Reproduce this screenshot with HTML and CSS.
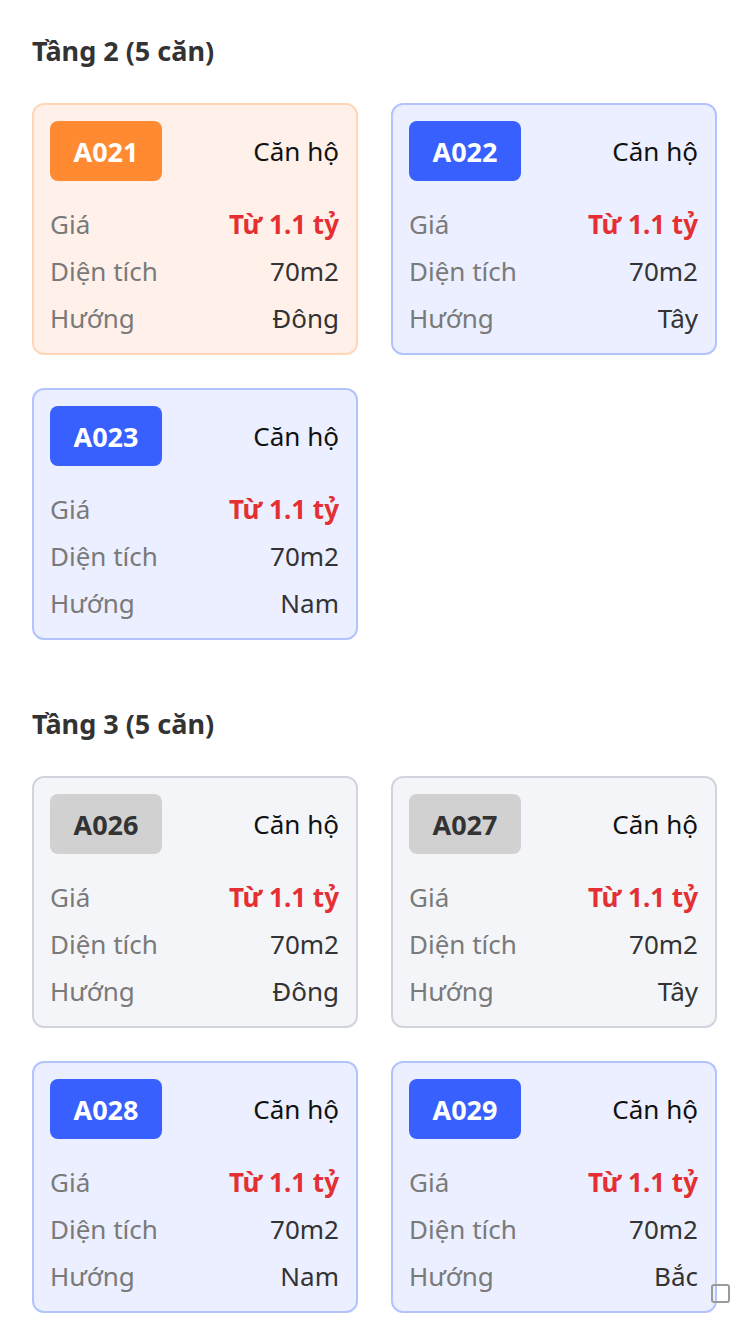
FILE: index.html
```html
<!DOCTYPE html>
<html lang="vi">
<head>
<meta charset="utf-8">
<link rel="stylesheet" href="styles.css">
</head>
<body>
<main class="page">
  <section class="floor">
    <h2 class="floor-title">Tầng 2 (5 căn)</h2>
    <div class="grid">
      <div class="card card-orange">
        <div class="card-head"><span class="badge">A021</span><span class="type">Căn hộ</span></div>
        <div class="row"><span class="label">Giá</span><span class="price">Từ 1.1 tỷ</span></div>
        <div class="row"><span class="label">Diện tích</span><span class="value">70m2</span></div>
        <div class="row"><span class="label">Hướng</span><span class="value">Đông</span></div>
      </div>
      <div class="card card-blue">
        <div class="card-head"><span class="badge">A022</span><span class="type">Căn hộ</span></div>
        <div class="row"><span class="label">Giá</span><span class="price">Từ 1.1 tỷ</span></div>
        <div class="row"><span class="label">Diện tích</span><span class="value">70m2</span></div>
        <div class="row"><span class="label">Hướng</span><span class="value">Tây</span></div>
      </div>
      <div class="card card-blue">
        <div class="card-head"><span class="badge">A023</span><span class="type">Căn hộ</span></div>
        <div class="row"><span class="label">Giá</span><span class="price">Từ 1.1 tỷ</span></div>
        <div class="row"><span class="label">Diện tích</span><span class="value">70m2</span></div>
        <div class="row"><span class="label">Hướng</span><span class="value">Nam</span></div>
      </div>
    </div>
  </section>
  <section class="floor">
    <h2 class="floor-title">Tầng 3 (5 căn)</h2>
    <div class="grid">
      <div class="card card-gray">
        <div class="card-head"><span class="badge">A026</span><span class="type">Căn hộ</span></div>
        <div class="row"><span class="label">Giá</span><span class="price">Từ 1.1 tỷ</span></div>
        <div class="row"><span class="label">Diện tích</span><span class="value">70m2</span></div>
        <div class="row"><span class="label">Hướng</span><span class="value">Đông</span></div>
      </div>
      <div class="card card-gray">
        <div class="card-head"><span class="badge">A027</span><span class="type">Căn hộ</span></div>
        <div class="row"><span class="label">Giá</span><span class="price">Từ 1.1 tỷ</span></div>
        <div class="row"><span class="label">Diện tích</span><span class="value">70m2</span></div>
        <div class="row"><span class="label">Hướng</span><span class="value">Tây</span></div>
      </div>
      <div class="card card-blue">
        <div class="card-head"><span class="badge">A028</span><span class="type">Căn hộ</span></div>
        <div class="row"><span class="label">Giá</span><span class="price">Từ 1.1 tỷ</span></div>
        <div class="row"><span class="label">Diện tích</span><span class="value">70m2</span></div>
        <div class="row"><span class="label">Hướng</span><span class="value">Nam</span></div>
      </div>
      <div class="card card-blue">
        <div class="card-head"><span class="badge">A029</span><span class="type">Căn hộ</span></div>
        <div class="row"><span class="label">Giá</span><span class="price">Từ 1.1 tỷ</span></div>
        <div class="row"><span class="label">Diện tích</span><span class="value">70m2</span></div>
        <div class="row"><span class="label">Hướng</span><span class="value">Bắc</span></div>
      </div>
    </div>
  </section>
</main>
<span class="corner-box"></span>
</body>
</html>
```
FILE: styles.css
```css
* { box-sizing: border-box; }
html, body { margin: 0; padding: 0; background: #ffffff; }
body {
  font-family: "Noto Sans", "Open Sans", sans-serif;
  color: #333333;
  width: 750px;
  height: 1334px;
  overflow: hidden;
  position: relative;
}
.page {
  padding: 32px 33px 0 32px;
  display: flex;
  flex-direction: column;
  gap: 65px;
}
.floor-title {
  margin: 0 0 33px 0;
  font-size: 27px;
  line-height: 38px;
  font-weight: 700;
  color: #333333;
}
.grid {
  display: grid;
  grid-template-columns: 326px 326px;
  column-gap: 33px;
  row-gap: 33px;
}
.card {
  height: 252px;
  border-radius: 12px;
  border: 2px solid;
  padding: 16px 17px 12px 16px;
  display: flex;
  flex-direction: column;
}
.card-orange { background: #fff1ea; border-color: #ffd6b8; }
.card-blue { background: #ebefff; border-color: #b3c4fd; }
.card-gray { background: #f4f5f9; border-color: #d1d4dc; }
.card-head {
  display: flex;
  justify-content: space-between;
  align-items: center;
  height: 60px;
  margin-bottom: 19px;
}
.badge {
  width: 112px;
  height: 60px;
  border-radius: 8px;
  display: flex;
  align-items: center;
  justify-content: center;
  font-size: 27px;
  font-weight: 700;
  color: #ffffff;
}
.card-orange .badge { background: #ff8a32; }
.card-blue .badge { background: #3760ff; }
.card-gray .badge { background: #d1d1d1; color: #333333; }
.type {
  font-size: 26px;
  color: #111111;
}
.row {
  display: flex;
  justify-content: space-between;
  align-items: center;
  height: 47px;
  font-size: 26px;
}
.label { color: #7a7a7a; }
.value { color: #333333; }
.price { color: #e53033; font-weight: 700; }
.corner-box {
  position: absolute;
  left: 711px;
  top: 1284px;
  width: 19px;
  height: 19px;
  border: 2px solid #9a9a9a;
  border-radius: 3px;
}
```
